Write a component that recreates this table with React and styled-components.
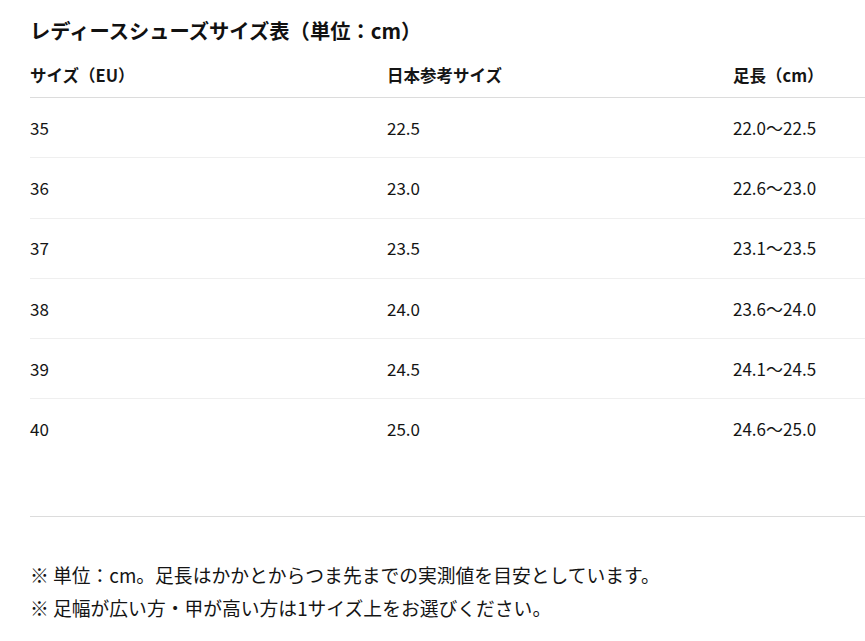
import React from 'react';
import styled, { createGlobalStyle } from 'styled-components';

const GlobalStyle = createGlobalStyle`
    html, body {
        margin: 0;
        padding: 0;
        background: #ffffff;
        overflow: hidden;
    }
    body {
        font-family: 'Noto Sans CJK JP', 'Noto Sans', sans-serif;
        color: #151515;
    }
`;

const Page = styled.div`
    padding: 14px 0 0 30px;
`;

const Title = styled.h1`
    font-size: 20.3px;
    font-weight: 700;
    line-height: 32px;
    margin: 0;
    color: #111111;
`;

const Table = styled.div`
    display: flex;
    flex-direction: column;
`;

const HeaderRow = styled.div`
    display: grid;
    grid-template-columns: 357px 346px 1fr;
    padding: 18px 0 11px 0;
    border-bottom: 1px solid #dcdcdc;
`;

const Row = styled.div`
    display: grid;
    grid-template-columns: 357px 346px 1fr;
    align-items: center;
    box-sizing: border-box;
    height: ${(props) => (props.last ? '61px' : '60.3px')};
    border-bottom: 1px solid ${(props) => (props.last ? 'transparent' : '#efefef')};
`;

const Cell = styled.div`
    font-size: ${(props) => (props.header ? '16.5px' : '17px')};
    font-weight: ${(props) => (props.header ? 700 : 400)};
    line-height: 22px;
    white-space: nowrap;
`;

const Divider = styled.hr`
    border: 0;
    border-top: 1px solid #dcdcdc;
    margin: 56px 0 0 0;
`;

const Notes = styled.div`
    padding-top: 41px;
`;

const Note = styled.p`
    margin: 0;
    font-size: 18.8px;
    line-height: 33px;
    color: #151515;
`;

const rows = [
    ['35', '22.5', '22.0〜22.5'],
    ['36', '23.0', '22.6〜23.0'],
    ['37', '23.5', '23.1〜23.5'],
    ['38', '24.0', '23.6〜24.0'],
    ['39', '24.5', '24.1〜24.5'],
    ['40', '25.0', '24.6〜25.0']
];

export default function App() {
    return (
        <Page>
            <GlobalStyle />
            <Title>レディースシューズサイズ表（単位：cm）</Title>
            <Table>
                <HeaderRow>
                    <Cell header>サイズ（EU）</Cell>
                    <Cell header>日本参考サイズ</Cell>
                    <Cell header>足長（cm）</Cell>
                </HeaderRow>
                {rows.map((r, i) => (
                    <Row key={r[0]} last={i === rows.length - 1}>
                        {r.map((c, j) => (
                            <Cell key={j}>{c}</Cell>
                        ))}
                    </Row>
                ))}
            </Table>
            <Divider />
            <Notes>
                <Note>※ 単位：cm。足長はかかとからつま先までの実測値を目安としています。</Note>
                <Note>※ 足幅が広い方・甲が高い方は1サイズ上をお選びください。</Note>
            </Notes>
        </Page>
    );
}
